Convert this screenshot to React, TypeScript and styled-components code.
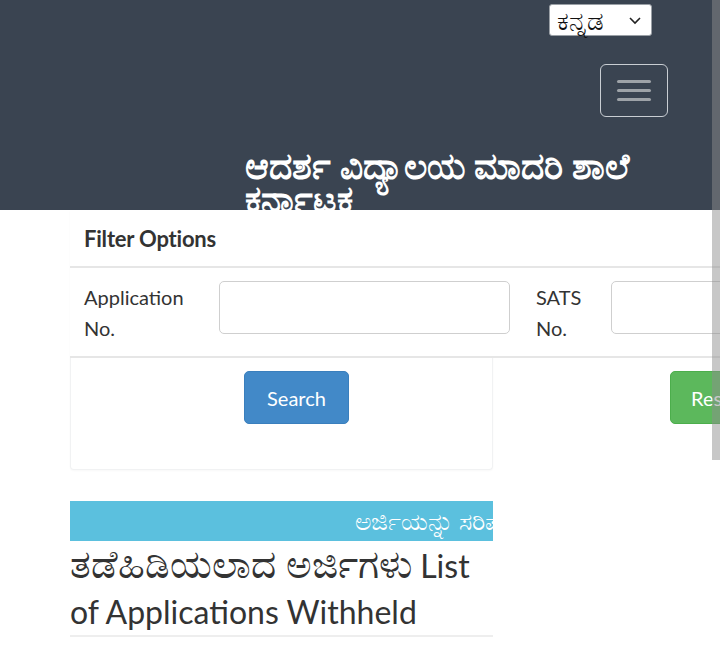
import React from 'react';
import styled, { createGlobalStyle } from 'styled-components';

const GlobalStyle = createGlobalStyle`
  html, body {
    margin: 0;
    padding: 0;
    background: #fff;
    overflow: hidden;
  }
  body {
    font-family: Lato, "Noto Sans", "Liberation Sans", sans-serif;
    color: #333;
  }
  * { box-sizing: border-box; }
`;

const Page = styled.div`
  position: relative;
  width: 720px;
  height: 652px;
  overflow: hidden;
`;

// the Kannada fallback face draws small next to Lato, so it gets its own size
const Kn = styled.span<{ $size: number }>`
  font-size: ${(p) => p.$size}px;
`;

const Header = styled.header`
  height: 210px;
  background-color: #3a4451;
  overflow: hidden;
  display: flex;
  flex-direction: column;
`;

const TopBar = styled.div`
  display: flex;
  justify-content: flex-end;
  padding: 4px 68px 0 0;
`;

const LangSelect = styled.div`
  width: 103px;
  height: 32px;
  background: #fff;
  border: 1px solid #9aa0a6;
  border-radius: 3px;
  display: flex;
  align-items: center;
  justify-content: space-between;
  padding: 0 8px 0 7px;
  color: #111;
  line-height: 1;

  svg {
    width: 16px;
    height: 16px;
  }
`;

const NavRow = styled.div`
  display: flex;
  justify-content: flex-end;
  padding: 28px 52px 0 0;
`;

const Toggle = styled.button`
  width: 68px;
  height: 53px;
  background: transparent;
  border: 1.5px solid #c9ced3;
  border-radius: 6px;
  display: flex;
  flex-direction: column;
  align-items: center;
  justify-content: center;
  gap: 6px;
  padding: 0;
`;

const ToggleBar = styled.span`
  display: block;
  width: 34px;
  height: 3px;
  border-radius: 2px;
  background: #9ea3a8;
`;

const Title = styled.h1`
  margin: 32px 0 0 245px;
  font-size: 36px;
  line-height: 33px;
  font-weight: 700;
  color: #fff;
  width: 420px;
`;

const Main = styled.div`
  padding-left: 70px;
`;

const Card = styled.div`
  width: 423px;
  height: 260px;
  background: #fff;
  border: 1px solid #f1f2f3;
  border-top: none;
  border-radius: 0 0 4px 4px;
  box-shadow: 0 1px 2px rgba(0, 0, 0, 0.03);
`;

const CardHeading = styled.div`
  position: relative;
  width: 651px;
  height: 58px;
  margin-left: -1px;
  background: #fff;
  display: flex;
  align-items: center;
  padding-left: 14px;
  font-size: 22px;
  font-weight: 700;
  letter-spacing: -0.2px;
  color: #333;
  border-bottom: 2px solid #e6e6e6;
`;

const FieldRow = styled.div`
  position: relative;
  width: 651px;
  height: 90px;
  margin-left: -1px;
  background: #fff;
  display: flex;
  align-items: flex-start;
  padding-top: 13px;
  border-bottom: 2px solid #e6e6e6;
`;

const Label = styled.label<{ $w: number }>`
  width: ${(p) => p.$w}px;
  flex-shrink: 0;
  margin-top: 1px;
  padding-left: 14px;
  font-size: 20px;
  line-height: 31px;
  color: #333;
`;

const Input = styled.input<{ $w: number }>`
  width: ${(p) => p.$w}px;
  flex-shrink: 0;
  height: 53px;
  border: 1.5px solid #cfcfcf;
  border-radius: 5px;
  margin-right: 12px;
  background: #fff;
`;

const ButtonRow = styled.div`
  position: relative;
  width: 650px;
  display: flex;
  padding-top: 13px;
`;

const Button = styled.button<{ $tone: 'primary' | 'success'; $left: number }>`
  margin-left: ${(p) => p.$left}px;
  height: 53px;
  width: 105px;
  flex-shrink: 0;
  border: 1px solid ${(p) => (p.$tone === 'primary' ? '#3a7fbd' : '#4cae4c')};
  border-radius: 5px;
  background: ${(p) => (p.$tone === 'primary' ? '#4289c8' : '#5cb85c')};
  color: #fff;
  font-family: Lato, "Noto Sans", sans-serif;
  font-size: 20px;
  text-align: ${(p) => (p.$tone === 'primary' ? 'center' : 'left')};
  padding: ${(p) => (p.$tone === 'primary' ? '0' : '0 0 0 20px')};
`;

const Marquee = styled.div`
  margin-top: 31px;
  width: 423px;
  height: 40px;
  background: #5bc0de;
  color: #fff;
  display: flex;
  align-items: center;
  padding-left: 285px;
  overflow: hidden;
  white-space: nowrap;
`;

const Heading = styled.h2`
  margin: -1px 0 0;
  width: 423px;
  font-size: 32px;
  font-weight: 400;
  line-height: 46px;
  color: #333;
  padding-bottom: 0;
  border-bottom: 2px solid #eee;
`;

const Scrollbar = styled.div`
  position: absolute;
  top: 0;
  right: 0;
  width: 8px;
  height: 460px;
  background: rgba(140, 140, 140, 0.49);
`;

export default function App() {
  return (
    <Page>
      <GlobalStyle />
      <Header>
        <TopBar>
          <LangSelect>
            <Kn $size={26}>ಕನ್ನಡ</Kn>
            <svg viewBox="0 0 16 16" fill="none" stroke="#222" strokeWidth="1.6">
              <path d="M3 6l5 5 5-5" />
            </svg>
          </LangSelect>
        </TopBar>
        <NavRow>
          <Toggle aria-label="menu">
            <ToggleBar />
            <ToggleBar />
            <ToggleBar />
          </Toggle>
        </NavRow>
        <Title>ಆದರ್ಶ ವಿದ್ಯಾಲಯ ಮಾದರಿ ಶಾಲೆ ಕರ್ನಾಟಕ</Title>
      </Header>
      <Main>
        <Card>
          <CardHeading>Filter Options</CardHeading>
          <FieldRow>
            <Label $w={149}>Application No.</Label>
            <Input $w={291} />
            <Label $w={89}>SATS No.</Label>
            <Input $w={120} />
          </FieldRow>
          <ButtonRow>
            <Button $tone="primary" $left={173}>Search</Button>
            <Button $tone="success" $left={321}>Reset</Button>
          </ButtonRow>
        </Card>
        <Marquee>
          <Kn $size={25}>ಅರ್ಜಿಯನ್ನು ಸರಿಪಡಿಸಲು</Kn>
        </Marquee>
        <Heading>
          <Kn $size={39}>ತಡೆಹಿಡಿಯಲಾದ ಅರ್ಜಿಗಳು</Kn> List of Applications Withheld
        </Heading>
      </Main>
      <Scrollbar />
    </Page>
  );
}
